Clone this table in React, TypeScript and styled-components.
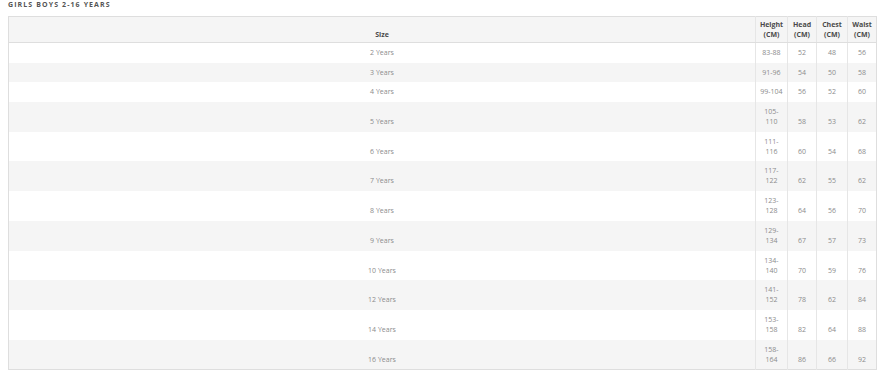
import styled, { createGlobalStyle } from 'styled-components';

const ROWS = [
  { size: '2 Years', height: ['83-88'], head: 52, chest: 48, waist: 56 },
  { size: '3 Years', height: ['91-96'], head: 54, chest: 50, waist: 58 },
  { size: '4 Years', height: ['99-104'], head: 56, chest: 52, waist: 60 },
  { size: '5 Years', height: ['105-', '110'], head: 58, chest: 53, waist: 62 },
  { size: '6 Years', height: ['111-', '116'], head: 60, chest: 54, waist: 68 },
  { size: '7 Years', height: ['117-', '122'], head: 62, chest: 55, waist: 62 },
  { size: '8 Years', height: ['123-', '128'], head: 64, chest: 56, waist: 70 },
  { size: '9 Years', height: ['129-', '134'], head: 67, chest: 57, waist: 73 },
  { size: '10 Years', height: ['134-', '140'], head: 70, chest: 59, waist: 76 },
  { size: '12 Years', height: ['141-', '152'], head: 78, chest: 62, waist: 84 },
  { size: '14 Years', height: ['153-', '158'], head: 82, chest: 64, waist: 88 },
  { size: '16 Years', height: ['158-', '164'], head: 86, chest: 66, waist: 92 },
];

const GlobalStyle = createGlobalStyle`
  body {
    margin: 0;
    background: #fff;
    font-family: 'Open Sans', 'Liberation Sans', sans-serif;
  }
`;

const Page = styled.div`
  display: flex;
  flex-direction: column;
  gap: 6px;
  padding: 0 9px 0 8px;
`;

const Title = styled.h3`
  margin: 0;
  font-size: 7px;
  line-height: 10px;
  font-weight: 700;
  letter-spacing: 1.1px;
  color: #555;
  text-transform: uppercase;
`;

const Table = styled.table`
  width: 100%;
  table-layout: fixed;
  border-collapse: collapse;
  border: 1px solid #dedede;
  font-size: 7px;
  line-height: 10px;

  th,
  td {
    text-align: center;
    vertical-align: bottom;
    white-space: nowrap;
  }
  th {
    padding: 3px 0 2px;
    font-weight: 700;
    color: #4a4a4a;
    background: #f5f5f5;
    border-bottom: 1px solid #dedede;
  }
  td {
    padding: 5px 0 4.7px;
    color: #8c8c8c;
  }
  th + th,
  td + td {
    border-left: 1px solid #e6e6e6;
  }
  tbody tr:nth-child(even) td {
    background: #f5f5f5;
  }
`;

const Lines = styled.span`
  display: block;
  white-space: pre-line;
`;

function App() {
  return (
    <>
      <GlobalStyle />
      <Page>
        <Title>Girls Boys 2-16 Years</Title>
        <Table>
          <colgroup>
            <col />
            <col style={{ width: 32 }} />
            <col style={{ width: 29 }} />
            <col style={{ width: 31 }} />
            <col style={{ width: 29 }} />
          </colgroup>
          <thead>
            <tr>
              <th>Size</th>
              <th>
                <Lines>{'Height\n(CM)'}</Lines>
              </th>
              <th>
                <Lines>{'Head\n(CM)'}</Lines>
              </th>
              <th>
                <Lines>{'Chest\n(CM)'}</Lines>
              </th>
              <th>
                <Lines>{'Waist\n(CM)'}</Lines>
              </th>
            </tr>
          </thead>
          <tbody>
            {ROWS.map((r) => (
              <tr key={r.size}>
                <td>{r.size}</td>
                <td>
                  <Lines>{r.height.join('\n')}</Lines>
                </td>
                <td>{r.head}</td>
                <td>{r.chest}</td>
                <td>{r.waist}</td>
              </tr>
            ))}
          </tbody>
        </Table>
      </Page>
    </>
  );
}

export default App;
